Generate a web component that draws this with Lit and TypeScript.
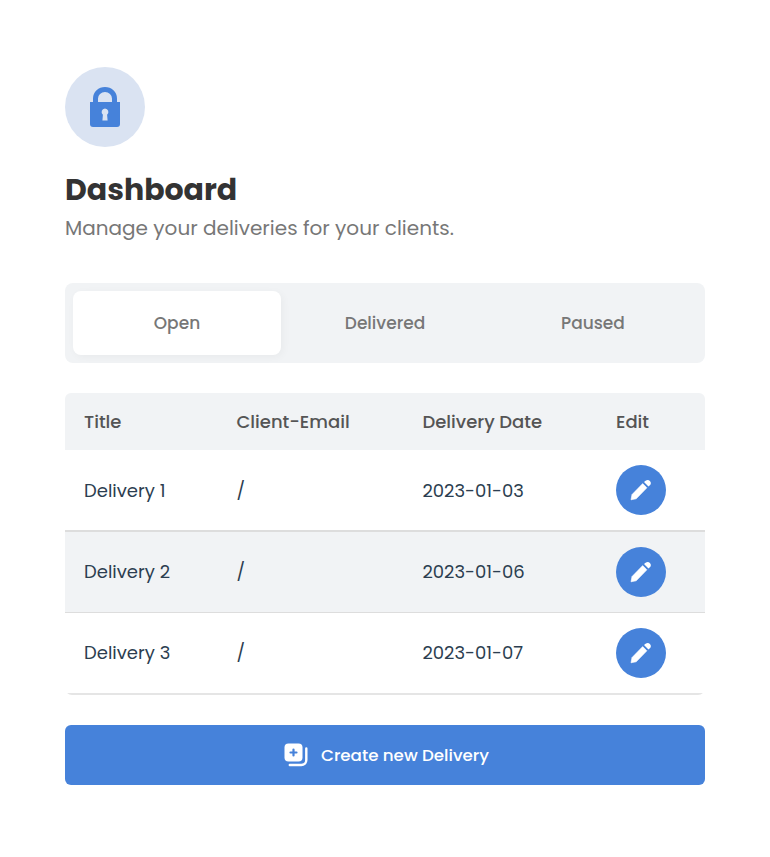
import { LitElement, html, css } from "lit";
import { customElement, state } from "lit/decorators.js";
import { classMap } from "lit/directives/class-map.js";

interface Delivery {
  title: string;
  email: string;
  date: string;
}

@customElement("app-root")
export class AppRoot extends LitElement {
  static styles = css`
    :host {
      display: block;
      box-sizing: border-box;
      height: 857px;
      padding: 67px 65px 0;
      background: #fff;
      font-family: Poppins, Inter, sans-serif;
      color: #2c3e50;
    }
    * { box-sizing: border-box; }
    svg { display: block; }
    .badge { display: block; width: 80px; height: 80px; }
    h1 {
      margin: 24px 0 0;
      font-size: 30px;
      line-height: 38px;
      font-weight: 700;
      color: #333;
      white-space: nowrap;
    }
    .sub {
      margin: 0;
      font-size: 20px;
      line-height: 38px;
      font-weight: 400;
      color: #777;
      white-space: nowrap;
    }
    .tabs {
      display: grid;
      grid-template-columns: repeat(3, 1fr);
      height: 80px;
      margin-top: 36px;
      padding: 8px;
      border-radius: 8px;
      background: #f1f3f5;
    }
    .tab {
      border: 0;
      padding: 0;
      border-radius: 8px;
      background: none;
      font: 500 17px/64px Poppins, Inter, sans-serif;
      color: #777;
    }
    .tab.active {
      background: #fff;
      box-shadow: 2px 2px 8px rgba(0, 0, 0, 0.04);
    }
    .table {
      margin-top: 30px;
      border-radius: 6px 6px 7px 7px;
      overflow: hidden;
    }
    .row {
      display: grid;
      grid-template-columns: 152.400px 186px 193.600px 1fr;
      align-items: center;
      height: 82px;
      padding-left: 19px;
      border-bottom: 2px solid #ddd;
      font-size: 18px;
      line-height: 26px;
      font-weight: 400;
    }
    .row.first { line-height: 27px; }
    .row.head {
      height: 57px;
      border: 0;
      background: #f1f3f5;
      font-weight: 500;
      color: #555;
    }
    .row.even { height: 81px; background: #f1f3f5; border-bottom-width: 1px; }
    .row.last { border-color: #e5e5e5; }
    .edit {
      width: 50px;
      height: 50px;
      padding: 0;
      border: 0;
      border-radius: 50%;
      background: #4682da;
    }
    .create {
      display: flex;
      align-items: center;
      width: 100%;
      height: 60px;
      margin-top: 30px;
      padding: 0 0 0 219px;
      gap: 13px;
      border: 0;
      border-radius: 6px;
      background: #4682da;
      color: #fff;
      font: 500 16.700px/26px Poppins, Inter, sans-serif;
    }
  `;

  @state() private active = "Open";

  private tabs = ["Open", "Delivered", "Paused"];

  private deliveries: Delivery[] = [
    { title: "Delivery 1", email: "/", date: "2023-01-03" },
    { title: "Delivery 2", email: "/", date: "2023-01-06" },
    { title: "Delivery 3", email: "/", date: "2023-01-07" },
  ];

  private renderRow(d: Delivery, i: number) {
    const cls = { row: true, first: i === 0, even: i % 2 === 1, last: i === this.deliveries.length - 1 };
    return html`<div class=${classMap(cls)}>
      <span>${d.title}</span>
      <span>${d.email}</span>
      <span>${d.date}</span>
      <button class="edit" aria-label="Edit">
        <svg width="50" height="50" viewBox="0 0 50 50" fill="#fff">
          <path d="M15 34.800l1-5.200L26.700 18.600l4.200 4.200L20.200 33.800z" stroke="#fff" stroke-width=".6" stroke-linejoin="round" />
          <path d="M28 17l1.600-1.300c1.400-1 3.100-1 4.300.2s1.300 2.900.2 4.200L32.500 21.500z" />
        </svg>
      </button>
    </div>`;
  }

  render() {
    return html`
      <svg class="badge" viewBox="0 0 80 80">
        <circle cx="40" cy="40" r="40" fill="#dae3f2" />
        <path d="M30.500 36v-4.500a9.500 9 0 0 1 19 0V36" fill="none" stroke="#4682da" stroke-width="5" />
        <path fill="#4682da" d="M25 36h30v21a3 3 0 0 1-3 3H28a3 3 0 0 1-3-3z" />
        <path fill="#4682da" d="M25 35h30v2H25z" />
        <path fill="#dae3f2" d="M40 41.500a3.500 3.500 0 0 1 2.100 6.200L42.600 53.500h-5.200L37.900 47.700A3.500 3.500 0 0 1 40 41.500z" />
      </svg>
      <h1>Dashboard</h1>
      <p class="sub">Manage your deliveries for your clients.</p>
      <div class="tabs">
        ${this.tabs.map(
          (t) => html`<button
            class=${classMap({ tab: true, active: t === this.active })}
            @click=${() => (this.active = t)}
          >${t}</button>`
        )}
      </div>
      <div class="table">
        <div class="row head">
          <span>Title</span><span>Client-Email</span><span>Delivery Date</span><span>Edit</span>
        </div>
        ${this.deliveries.map((d, i) => this.renderRow(d, i))}
      </div>
      <button class="create">
        <svg width="24" height="24" viewBox="0 0 24 24">
          <rect x="0.500" y="0.500" width="18" height="18" rx="4" fill="#fff" />
          <path d="M9.500 6.500v6M6.500 9.500h6" stroke="#4682da" stroke-width="2.200" stroke-linecap="round" />
          <path d="M22.300 5.500v11.500a5 5 0 0 1-5 5H5.800" fill="none" stroke="#fff" stroke-width="2.400" stroke-linecap="round" />
        </svg>
        <span>Create new Delivery</span>
      </button>
    `;
  }
}
